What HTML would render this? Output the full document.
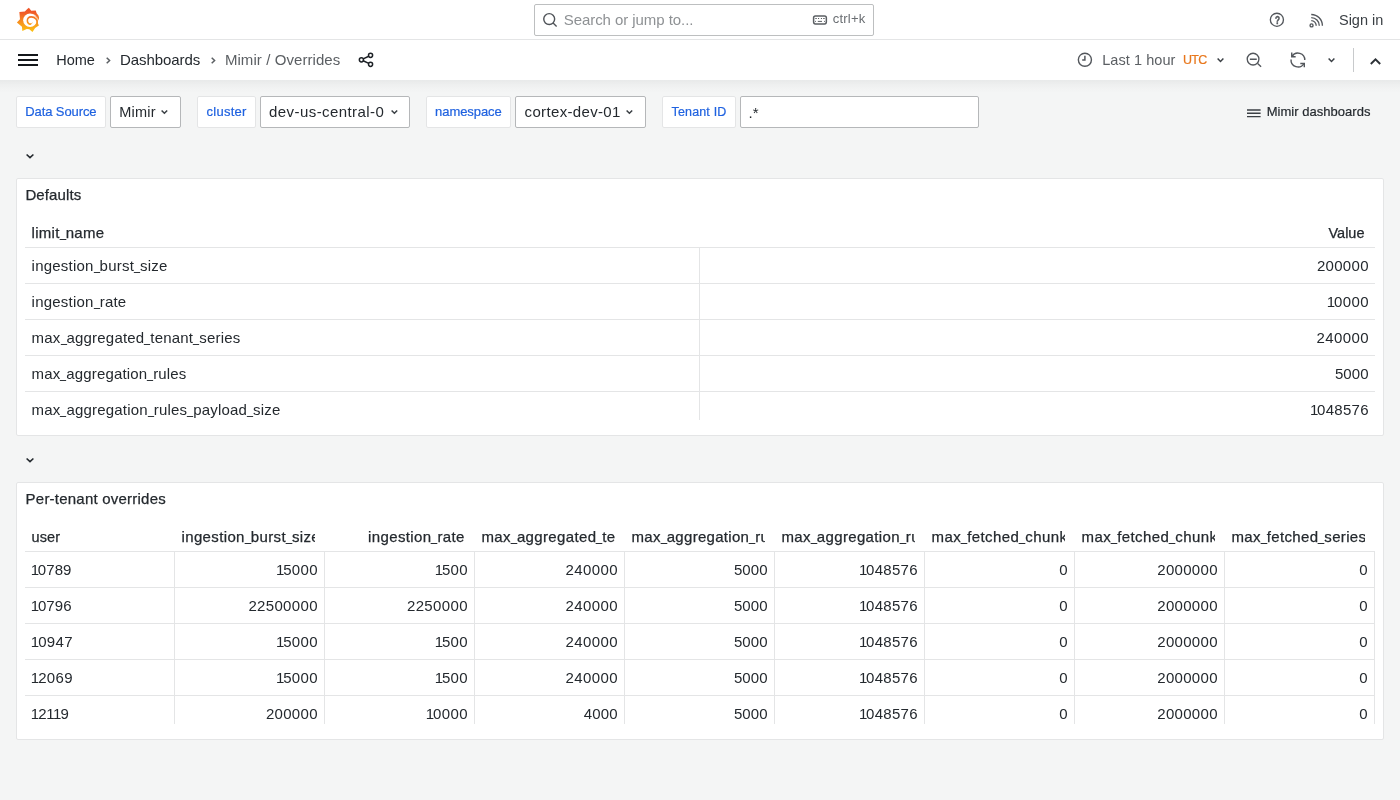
<!DOCTYPE html>
<html lang="en"><head><meta charset="utf-8"><title>Mimir / Overrides - Dashboards - Grafana</title>
<style>
*{box-sizing:border-box;margin:0;padding:0}
html,body{width:1400px;height:800px;overflow:hidden}
body{background:#f4f5f5;font-family:"Liberation Sans",sans-serif;font-size:14px;color:#24292e;position:relative}
.abs{position:absolute;white-space:nowrap}
.t{position:absolute;white-space:nowrap;line-height:1}
#topbar{position:absolute;left:0;top:0;width:1400px;height:40px;background:#fff;border-bottom:1px solid #e4e5e6}
#navbar{position:absolute;left:0;top:40px;width:1400px;height:40px;background:#fff}
#navshadow{position:absolute;left:0;top:80px;width:1400px;height:13px;background:linear-gradient(to bottom,rgba(36,41,46,0.055),rgba(36,41,46,0.02) 45%,rgba(36,41,46,0))}
#search{position:absolute;left:534px;top:4px;width:340px;height:32px;border:1px solid #bdbfc0;border-radius:2px;background:#fff}
.lbl{position:absolute;top:96px;height:32px;background:#fff;border:1px solid #e4e5e6;border-radius:2px}
.sel{position:absolute;top:96px;height:32px;background:#fff;border:1px solid #b5b7b9;border-radius:2px}
.panel{position:absolute;left:16px;width:1368px;height:258px;background:#fff;border:1px solid #e4e5e6;border-radius:2px}
.hl{position:absolute;height:1px;background:#e4e5e6}
.vl{position:absolute;width:1px;background:#e4e5e6}
.hd{-webkit-text-stroke:0.25px #24292e}
.mb{-webkit-text-stroke:0.2px #1f62e0}
.md{-webkit-text-stroke:0.2px #e8771c}
.md2{-webkit-text-stroke:0.2px #24292e}
.u{display:inline-block;font-style:normal;width:6px;letter-spacing:0;transform:scaleX(.72);transform-origin:0 50%;position:relative;top:-1.5px}
.o{font-style:normal;margin:0 -1.4px 0 -0.7px}
.clip{position:absolute;overflow:hidden;white-space:nowrap}
svg{position:absolute;overflow:visible}
#app{position:absolute;left:0;top:0;width:1400px;height:800px;will-change:transform}
</style></head>
<body>
<div id="app">
<header id="topbar">
<svg id="logo" style="left:10px;top:2px" width="40" height="36" viewBox="0 0 889 800">
<defs><linearGradient id="lg" gradientUnits="userSpaceOnUse" x1="0" y1="660" x2="0" y2="130"><stop offset="0" stop-color="#fcc212"/><stop offset="0.45" stop-color="#f78b1f"/><stop offset="0.8" stop-color="#f05a28"/><stop offset="1" stop-color="#ef5327"/></linearGradient></defs>
<path fill="url(#lg)" d="M420 128 L472 196 L572 188 L592 250 L632 300 L647 350 L636 394 L606 440 L642 520 L558 578 L500 664 L428 604 L372 602 L274 642 L266 552 L153 456 L222 386 L208 224 L330 212 L384 154 Z"/>
<circle cx="445" cy="405" r="152" fill="#fff"/>
<path fill="none" stroke="url(#lg)" stroke-width="35" stroke-linecap="round" d="M604 480 C616 400 566 331 472 331 C412 331 384 372 386 420 C388 468 424 494 452 492"/>
<path fill="none" stroke="url(#lg)" stroke-width="20" stroke-linecap="round" d="M445 494 C470 493 486 482 492 468"/>
<path fill="none" stroke="#fff" stroke-opacity="0.85" stroke-width="16" stroke-linecap="round" d="M516 276 C572 294 608 345 623 404"/>
</svg>
<div id="search">
</div>
<svg style="left:537px;top:8px" width="26" height="24" viewBox="0 0 26 24" fill="none" stroke="#4f5358" stroke-width="1.4"><circle cx="12.2" cy="11.1" r="5.45"/><path d="M16.1 15 L19.6 18.4"/></svg>
<svg style="left:807px;top:8px" width="26" height="24" viewBox="0 0 26 24" fill="none" stroke="#5b5f63"><rect x="6.6" y="7.95" width="12.75" height="7.95" rx="1.8" stroke-width="1.5"/><path d="M8.3 10.5 h1.5 M11 10.5 h1.1 M13.9 10.5 h1.1 M16.2 10.5 h1.5 M8.1 13.4 h0.9 M10.8 13.4 h4.2 M17.1 13.4 h0.9" stroke-width="1"/></svg>
<span class="t" style="left:563.7px;top:11px;font-size:15px;line-height:17px;color:#8e9194;letter-spacing:-0.058px;">Search or jump to...</span>
<span class="t" style="left:832.7px;top:11px;font-size:13px;line-height:15px;color:#6a6e72;letter-spacing:0.216px;">ctrl+k</span>
<svg style="left:1264px;top:8px" width="26" height="24" viewBox="0 0 26 24"><circle cx="12.9" cy="11.76" r="6.55" fill="none" stroke="#53575c" stroke-width="1.35"/></svg>
<span class="t" style="left:1275.0px;top:15px;font-size:10px;line-height:11px;color:#53575c;font-weight:bold;transform:scaleX(.82);transform-origin:0 0;-webkit-text-stroke:0.45px #53575c;">?</span>
<svg style="left:1303px;top:8px" width="26" height="24" viewBox="0 0 26 24" fill="none" stroke="#53575c" stroke-width="1.35"><circle cx="8.55" cy="17.4" r="1.5"/><path d="M8.25 12.6 A4.95 4.95 0 0 1 13.2 17.75"/><path d="M8.25 9.55 A8.05 8.05 0 0 1 16.3 17.75"/><path d="M8.25 6.45 A11.15 11.15 0 0 1 19.4 17.75"/></svg>
<span class="t" style="left:1339.0px;top:12px;font-size:14.5px;line-height:16px;color:#3a3f44;letter-spacing:-0.023px;">Sign in</span>
</header>
<nav id="navbar">
<svg style="left:18px;top:14px" width="20" height="12" viewBox="0 0 20 12"><path d="M0 1 H20 M0 6 H20 M0 11 H20" stroke="#14171b" stroke-width="2"/></svg>
</nav>
<div id="navshadow"></div>
<span class="t" style="left:56.3px;top:52px;font-size:14.5px;line-height:16px;letter-spacing:-0.027px;">Home</span>
<span class="t" style="left:120.0px;top:51px;font-size:15px;line-height:17px;letter-spacing:-0.065px;">Dashboards</span>
<span class="t" style="left:224.9px;top:51px;font-size:15px;line-height:17px;color:#5b5f63;letter-spacing:0.077px;">Mimir / Overrides</span>
<svg style="left:106.0px;top:57.4px" width="5" height="7" viewBox="0 0 5 7"><path d="M0.7 0.7 L3.6 3.5 L0.7 6.3" fill="none" stroke="#5b5f63" stroke-width="1.5"/></svg>
<svg style="left:210.9px;top:57.4px" width="5" height="7" viewBox="0 0 5 7"><path d="M0.7 0.7 L3.6 3.5 L0.7 6.3" fill="none" stroke="#5b5f63" stroke-width="1.5"/></svg>
<svg style="left:353px;top:48px" width="26" height="24" viewBox="0 0 26 24" fill="none" stroke="#1d2126" stroke-width="1.5"><circle cx="17.55" cy="7.35" r="2.05"/><circle cx="8.4" cy="11.85" r="2.05"/><circle cx="17.55" cy="16.35" r="2.05"/><path d="M10.2 10.95 L15.75 8.25 M10.2 12.75 L15.75 15.45"/></svg>
<svg style="left:1072px;top:48px" width="26" height="24" viewBox="0 0 26 24" fill="none" stroke="#53575c" stroke-width="1.4"><circle cx="12.9" cy="11.76" r="6.55"/><path d="M12.9 7.8 V12 H10.2" stroke-width="1.5"/></svg>
<span class="t" style="left:1102.2px;top:52px;font-size:14.5px;line-height:16px;color:#5b5f63;letter-spacing:0.065px;">Last 1 hour</span>
<span class="t md" style="left:1182.9px;top:53px;font-size:12.5px;line-height:14px;color:#e8771c;letter-spacing:-0.695px;">UTC</span>
<svg style="left:1216.6px;top:57.8px" width="7" height="4.2" viewBox="0 0 7 4.2"><path d="M0.6 0.5 L3.5 3.5 L6.4 0.5" fill="none" stroke="#3a3f44" stroke-width="1.5"/></svg>
<svg style="left:1241px;top:48px" width="26" height="24" viewBox="0 0 26 24" fill="none" stroke="#53575c" stroke-width="1.35"><circle cx="12.07" cy="11.1" r="5.85"/><path d="M8.85 11.25 H15.75 M16.6 15.4 L20.1 18.75"/></svg>
<svg style="left:1285px;top:48px" width="26" height="24" viewBox="0 0 26 24" fill="none" stroke="#53575c" stroke-width="1.4"><path d="M7.0 8.4 A6.9 6.9 0 0 1 19.8 12.1"/><path d="M6.75 4.5 V8.7 H10.65"/><path d="M6.05 11.5 A6.9 6.9 0 0 0 18.9 15.5"/><path d="M15.3 15.45 H19.3 V19.3"/></svg>
<svg style="left:1328.4px;top:58.1px" width="7" height="4.2" viewBox="0 0 7 4.2"><path d="M0.6 0.5 L3.5 3.5 L6.4 0.5" fill="none" stroke="#3a3f44" stroke-width="1.5"/></svg>
<div class="vl" style="left:1353px;top:48px;height:24px;background:#c8cacc"></div>
<svg style="left:1369.5px;top:57.5px" width="11" height="7" viewBox="0 0 11 7"><path d="M0.8 6 L5.5 1.3 L10.2 6" fill="none" stroke="#2c3136" stroke-width="1.9"/></svg>
<div class="lbl" style="left:16px;width:90px"></div>
<span class="t mb" style="left:25.2px;top:104px;font-size:13px;line-height:15px;color:#1f62e0;letter-spacing:-0.086px;">Data Source</span>
<div class="sel" style="left:110px;width:71px"></div>
<span class="t" style="left:119.3px;top:104px;font-size:14.5px;line-height:16px;letter-spacing:0.192px;">Mimir</span>
<svg style="left:161.2px;top:110px" width="6.8" height="4" viewBox="0 0 6.8 4"><path d="M0.6 0.5 L3.4 3.3 L6.2 0.5" fill="none" stroke="#3a3f44" stroke-width="1.5"/></svg>
<div class="lbl" style="left:197px;width:59px"></div>
<span class="t mb" style="left:206.6px;top:104px;font-size:13px;line-height:15px;color:#1f62e0;letter-spacing:0.252px;">cluster</span>
<div class="sel" style="left:260px;width:150px"></div>
<span class="t" style="left:269.1px;top:103px;font-size:15px;line-height:17px;letter-spacing:0.421px;">dev-us-central-0</span>
<svg style="left:390.59999999999997px;top:110px" width="6.8" height="4" viewBox="0 0 6.8 4"><path d="M0.6 0.5 L3.4 3.3 L6.2 0.5" fill="none" stroke="#3a3f44" stroke-width="1.5"/></svg>
<div class="lbl" style="left:426px;width:85px"></div>
<span class="t mb" style="left:435.1px;top:104px;font-size:13px;line-height:15px;color:#1f62e0;letter-spacing:-0.076px;">namespace</span>
<div class="sel" style="left:515px;width:131px"></div>
<span class="t" style="left:524.6px;top:103px;font-size:15px;line-height:17px;letter-spacing:0.341px;">cortex-dev-01</span>
<svg style="left:626.4000000000001px;top:110px" width="6.8" height="4" viewBox="0 0 6.8 4"><path d="M0.6 0.5 L3.4 3.3 L6.2 0.5" fill="none" stroke="#3a3f44" stroke-width="1.5"/></svg>
<div class="lbl" style="left:662px;width:74px"></div>
<span class="t mb" style="left:671.5px;top:105px;font-size:12.5px;line-height:14px;color:#1f62e0;letter-spacing:0.162px;">Tenant ID</span>
<div class="sel" style="left:740px;width:239px"></div>
<span class="t" style="left:748.6px;top:104px;font-size:15px;line-height:17px;letter-spacing:-0.004px;">.*</span>
<svg style="left:1247px;top:108.7px" width="14" height="9" viewBox="0 0 14 9"><path d="M0 1 H13.6 M0 4.3 H13.6 M0 7.6 H13.6" stroke="#3a3f44" stroke-width="1.4"/></svg>
<span class="t md2" style="left:1266.7px;top:104px;font-size:13px;line-height:15px;letter-spacing:0.032px;">Mimir dashboards</span>
<svg style="left:25.6px;top:153.9px" width="8" height="4.4" viewBox="0 0 8 4.4"><path d="M0.6 0.5 L4.0 3.7 L7.4 0.5" fill="none" stroke="#24292e" stroke-width="1.6"/></svg>
<svg style="left:25.6px;top:457.9px" width="8" height="4.4" viewBox="0 0 8 4.4"><path d="M0.6 0.5 L4.0 3.7 L7.4 0.5" fill="none" stroke="#24292e" stroke-width="1.6"/></svg>
<section class="panel" style="top:178px"></section>
<span class="t hd" style="left:25.4px;top:186px;font-size:15px;line-height:17px;letter-spacing:0.11px;">Defaults</span>
<span class="t hd" style="left:31.6px;top:224px;font-size:15px;line-height:17px;letter-spacing:0.277px;">limit<i class="u">_</i>name</span>
<span class="t hd" style="right:35.5px;top:225px;font-size:14.5px;line-height:16px;letter-spacing:-0.003px;margin-right:0.003px;">Value</span>
<div class="hl" style="left:25px;top:247px;width:1350px"></div>
<span class="t" style="left:31.6px;top:257px;font-size:15px;line-height:17px;letter-spacing:0.219px;">ingestion<i class="u">_</i>burst<i class="u">_</i>size</span>
<span class="t" style="right:31.5px;top:257px;font-size:15px;line-height:17px;letter-spacing:0.309px;margin-right:-0.309px;">200000</span>
<div class="hl" style="left:25px;top:283px;width:1350px"></div>
<span class="t" style="left:31.6px;top:293px;font-size:15px;line-height:17px;letter-spacing:0.226px;">ingestion<i class="u">_</i>rate</span>
<span class="t" style="right:31.5px;top:293px;font-size:15px;line-height:17px;letter-spacing:0.347px;margin-right:-0.347px;"><i class="o">1</i>0000</span>
<div class="hl" style="left:25px;top:319px;width:1350px"></div>
<span class="t" style="left:31.6px;top:329px;font-size:15px;line-height:17px;letter-spacing:0.193px;">max<i class="u">_</i>aggregated<i class="u">_</i>tenant<i class="u">_</i>series</span>
<span class="t" style="right:31.5px;top:329px;font-size:15px;line-height:17px;letter-spacing:0.389px;margin-right:-0.389px;">240000</span>
<div class="hl" style="left:25px;top:355px;width:1350px"></div>
<span class="t" style="left:31.6px;top:365px;font-size:15px;line-height:17px;letter-spacing:0.14px;">max<i class="u">_</i>aggregation<i class="u">_</i>rules</span>
<span class="t" style="right:31.5px;top:365px;font-size:15px;line-height:17px;letter-spacing:0.077px;margin-right:-0.077px;">5000</span>
<div class="hl" style="left:25px;top:391px;width:1350px"></div>
<span class="t" style="left:31.6px;top:401px;font-size:15px;line-height:17px;letter-spacing:0.182px;">max<i class="u">_</i>aggregation<i class="u">_</i>rules<i class="u">_</i>payload<i class="u">_</i>size</span>
<span class="t" style="right:31.5px;top:401px;font-size:15px;line-height:17px;letter-spacing:0.267px;margin-right:-0.267px;"><i class="o">1</i>048576</span>
<div class="vl" style="left:699px;top:248px;height:172px"></div>
<section class="panel" style="top:482px"></section>
<span class="t hd" style="left:25.6px;top:490px;font-size:15px;line-height:17px;letter-spacing:0.221px;">Per-tenant overrides</span>
<div class="hl" style="left:25px;top:551px;width:1350px"></div>
<span class="t hd" style="left:31.5px;top:529px;font-size:14.5px;line-height:16px;letter-spacing:0.131px;">user</span>
<div class="clip" style="left:175px;top:524px;width:140px;height:26px">
<span class="t hd" style="left:6.5px;top:4px;font-size:15px;line-height:17px;letter-spacing:0.361px;">ingestion<i class="u">_</i>burst<i class="u">_</i>size</span>
</div>
<span class="t hd" style="right:935.6px;top:528px;font-size:15px;line-height:17px;letter-spacing:0.367px;margin-right:-0.367px;">ingestion<i class="u">_</i>rate</span>
<div class="clip" style="left:475px;top:524px;width:140px;height:26px">
<span class="t hd" style="left:6.5px;top:4px;font-size:15px;line-height:17px;letter-spacing:0.352px;">max<i class="u">_</i>aggregated<i class="u">_</i>tenant<i class="u">_</i>series</span>
</div>
<div class="clip" style="left:625px;top:524px;width:140px;height:26px">
<span class="t hd" style="left:6.5px;top:4px;font-size:15px;line-height:17px;letter-spacing:0.295px;">max<i class="u">_</i>aggregation<i class="u">_</i>rules</span>
</div>
<div class="clip" style="left:775px;top:524px;width:140px;height:26px">
<span class="t hd" style="left:6.5px;top:4px;font-size:15px;line-height:17px;letter-spacing:0.338px;">max<i class="u">_</i>aggregation<i class="u">_</i>rules<i class="u">_</i>payload<i class="u">_</i>size</span>
</div>
<div class="clip" style="left:925px;top:524px;width:140px;height:26px">
<span class="t hd" style="left:6.5px;top:4px;font-size:15px;line-height:17px;letter-spacing:0.429px;">max<i class="u">_</i>fetched<i class="u">_</i>chunk<i class="u">_</i>bytes<i class="u">_</i>per<i class="u">_</i>query</span>
</div>
<div class="clip" style="left:1075px;top:524px;width:140px;height:26px">
<span class="t hd" style="left:6.5px;top:4px;font-size:15px;line-height:17px;letter-spacing:0.429px;">max<i class="u">_</i>fetched<i class="u">_</i>chunks<i class="u">_</i>per<i class="u">_</i>query</span>
</div>
<div class="clip" style="left:1225px;top:524px;width:140px;height:26px">
<span class="t hd" style="left:6.5px;top:4px;font-size:15px;line-height:17px;letter-spacing:0.328px;">max<i class="u">_</i>fetched<i class="u">_</i>series<i class="u">_</i>per<i class="u">_</i>query</span>
</div>
<span class="t" style="left:31.5px;top:561px;font-size:15px;line-height:17px;letter-spacing:0.072px;"><i class="o">1</i>0789</span>
<span class="t" style="right:1082.5px;top:561px;font-size:15px;line-height:17px;letter-spacing:0.297px;margin-right:-0.297px;"><i class="o">1</i>5000</span>
<span class="t" style="right:932.5px;top:561px;font-size:15px;line-height:17px;letter-spacing:0.277px;margin-right:-0.277px;"><i class="o">1</i>500</span>
<span class="t" style="right:782.5px;top:561px;font-size:15px;line-height:17px;letter-spacing:0.389px;margin-right:-0.389px;">240000</span>
<span class="t" style="right:632.5px;top:561px;font-size:15px;line-height:17px;letter-spacing:0.077px;margin-right:-0.077px;">5000</span>
<span class="t" style="right:482.5px;top:561px;font-size:15px;line-height:17px;letter-spacing:0.267px;margin-right:-0.267px;"><i class="o">1</i>048576</span>
<span class="t" style="right:332.5px;top:561px;font-size:15px;line-height:17px;">0</span>
<span class="t" style="right:182.5px;top:561px;font-size:15px;line-height:17px;letter-spacing:0.3px;margin-right:-0.3px;">2000000</span>
<span class="t" style="right:32.5px;top:561px;font-size:15px;line-height:17px;">0</span>
<div class="hl" style="left:25px;top:587px;width:1350px"></div>
<span class="t" style="left:31.5px;top:597px;font-size:15px;line-height:17px;letter-spacing:0.122px;"><i class="o">1</i>0796</span>
<span class="t" style="right:1082.5px;top:597px;font-size:15px;line-height:17px;letter-spacing:0.337px;margin-right:-0.337px;">22500000</span>
<span class="t" style="right:932.5px;top:597px;font-size:15px;line-height:17px;letter-spacing:0.35px;margin-right:-0.35px;">2250000</span>
<span class="t" style="right:782.5px;top:597px;font-size:15px;line-height:17px;letter-spacing:0.389px;margin-right:-0.389px;">240000</span>
<span class="t" style="right:632.5px;top:597px;font-size:15px;line-height:17px;letter-spacing:0.077px;margin-right:-0.077px;">5000</span>
<span class="t" style="right:482.5px;top:597px;font-size:15px;line-height:17px;letter-spacing:0.267px;margin-right:-0.267px;"><i class="o">1</i>048576</span>
<span class="t" style="right:332.5px;top:597px;font-size:15px;line-height:17px;">0</span>
<span class="t" style="right:182.5px;top:597px;font-size:15px;line-height:17px;letter-spacing:0.3px;margin-right:-0.3px;">2000000</span>
<span class="t" style="right:32.5px;top:597px;font-size:15px;line-height:17px;">0</span>
<div class="hl" style="left:25px;top:623px;width:1350px"></div>
<span class="t" style="left:31.5px;top:633px;font-size:15px;line-height:17px;letter-spacing:0.347px;"><i class="o">1</i>0947</span>
<span class="t" style="right:1082.5px;top:633px;font-size:15px;line-height:17px;letter-spacing:0.297px;margin-right:-0.297px;"><i class="o">1</i>5000</span>
<span class="t" style="right:932.5px;top:633px;font-size:15px;line-height:17px;letter-spacing:0.277px;margin-right:-0.277px;"><i class="o">1</i>500</span>
<span class="t" style="right:782.5px;top:633px;font-size:15px;line-height:17px;letter-spacing:0.389px;margin-right:-0.389px;">240000</span>
<span class="t" style="right:632.5px;top:633px;font-size:15px;line-height:17px;letter-spacing:0.077px;margin-right:-0.077px;">5000</span>
<span class="t" style="right:482.5px;top:633px;font-size:15px;line-height:17px;letter-spacing:0.267px;margin-right:-0.267px;"><i class="o">1</i>048576</span>
<span class="t" style="right:332.5px;top:633px;font-size:15px;line-height:17px;">0</span>
<span class="t" style="right:182.5px;top:633px;font-size:15px;line-height:17px;letter-spacing:0.3px;margin-right:-0.3px;">2000000</span>
<span class="t" style="right:32.5px;top:633px;font-size:15px;line-height:17px;">0</span>
<div class="hl" style="left:25px;top:659px;width:1350px"></div>
<span class="t" style="left:31.5px;top:669px;font-size:15px;line-height:17px;letter-spacing:0.347px;"><i class="o">1</i>2069</span>
<span class="t" style="right:1082.5px;top:669px;font-size:15px;line-height:17px;letter-spacing:0.297px;margin-right:-0.297px;"><i class="o">1</i>5000</span>
<span class="t" style="right:932.5px;top:669px;font-size:15px;line-height:17px;letter-spacing:0.277px;margin-right:-0.277px;"><i class="o">1</i>500</span>
<span class="t" style="right:782.5px;top:669px;font-size:15px;line-height:17px;letter-spacing:0.389px;margin-right:-0.389px;">240000</span>
<span class="t" style="right:632.5px;top:669px;font-size:15px;line-height:17px;letter-spacing:0.077px;margin-right:-0.077px;">5000</span>
<span class="t" style="right:482.5px;top:669px;font-size:15px;line-height:17px;letter-spacing:0.267px;margin-right:-0.267px;"><i class="o">1</i>048576</span>
<span class="t" style="right:332.5px;top:669px;font-size:15px;line-height:17px;">0</span>
<span class="t" style="right:182.5px;top:669px;font-size:15px;line-height:17px;letter-spacing:0.3px;margin-right:-0.3px;">2000000</span>
<span class="t" style="right:32.5px;top:669px;font-size:15px;line-height:17px;">0</span>
<div class="hl" style="left:25px;top:695px;width:1350px"></div>
<span class="t" style="left:31.5px;top:705px;font-size:15px;line-height:17px;letter-spacing:0.45px;"><i class="o">1</i>2<i class="o">1</i><i class="o">1</i>9</span>
<span class="t" style="right:1082.5px;top:705px;font-size:15px;line-height:17px;letter-spacing:0.309px;margin-right:-0.309px;">200000</span>
<span class="t" style="right:932.5px;top:705px;font-size:15px;line-height:17px;letter-spacing:0.347px;margin-right:-0.347px;"><i class="o">1</i>0000</span>
<span class="t" style="right:782.5px;top:705px;font-size:15px;line-height:17px;letter-spacing:0.143px;margin-right:-0.143px;">4000</span>
<span class="t" style="right:632.5px;top:705px;font-size:15px;line-height:17px;letter-spacing:0.077px;margin-right:-0.077px;">5000</span>
<span class="t" style="right:482.5px;top:705px;font-size:15px;line-height:17px;letter-spacing:0.267px;margin-right:-0.267px;"><i class="o">1</i>048576</span>
<span class="t" style="right:332.5px;top:705px;font-size:15px;line-height:17px;">0</span>
<span class="t" style="right:182.5px;top:705px;font-size:15px;line-height:17px;letter-spacing:0.3px;margin-right:-0.3px;">2000000</span>
<span class="t" style="right:32.5px;top:705px;font-size:15px;line-height:17px;">0</span>
<div class="vl" style="left:174px;top:552px;height:172px"></div>
<div class="vl" style="left:324px;top:552px;height:172px"></div>
<div class="vl" style="left:474px;top:552px;height:172px"></div>
<div class="vl" style="left:624px;top:552px;height:172px"></div>
<div class="vl" style="left:774px;top:552px;height:172px"></div>
<div class="vl" style="left:924px;top:552px;height:172px"></div>
<div class="vl" style="left:1074px;top:552px;height:172px"></div>
<div class="vl" style="left:1224px;top:552px;height:172px"></div>
<div class="vl" style="left:1374px;top:552px;height:172px"></div>
</div>
</body></html>
